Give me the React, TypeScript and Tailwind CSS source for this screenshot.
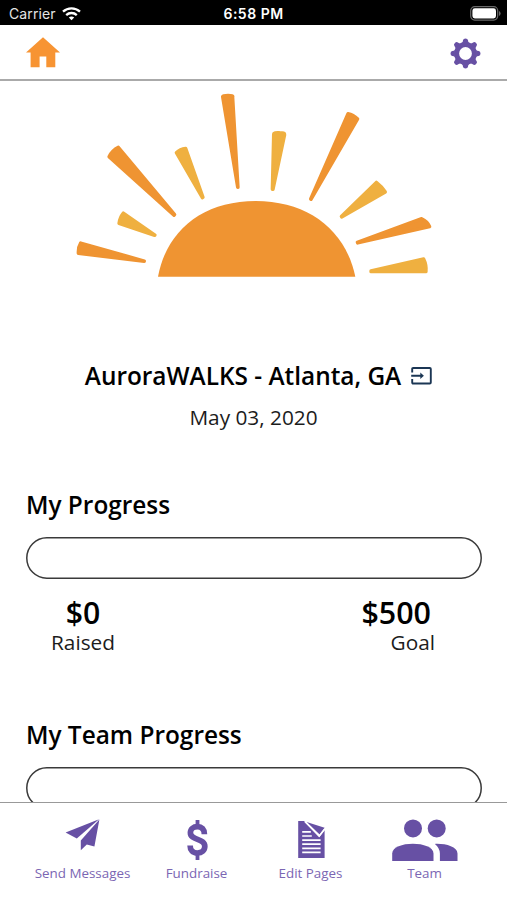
import React from "react";

function StatusBar() {
  return (
    <div className="grid h-[25px] shrink-0 grid-cols-3 items-center bg-black text-white">
      <div className="flex items-center gap-[6px] pl-[9px] pt-[3px]">
        <span className="font-['Inter',sans-serif] text-[14px] leading-[20px] tracking-[0.1px] text-[#e4e4e4]">Carrier</span>
        <svg width="19" height="14" viewBox="0 0 19 14" fill="none" stroke="#fff" strokeWidth="2.3">
          <path d="M1 4.7C5.8 .2 13.2 .2 18 4.7" />
          <path d="M4.2 8.1c3-2.8 7.6-2.8 10.6 0" />
          <path d="M9.5 13.2 6.8 10.5c1.5-1.4 3.9-1.4 5.4 0z" fill="#fff" stroke="none" />
        </svg>
      </div>
      <div className="pt-[3px] text-center font-['Inter',sans-serif] text-[14px] font-semibold leading-[20px] tracking-[0.5px] whitespace-nowrap">
        6:58 PM
      </div>
      <svg className="mt-[2px] mr-[6px] justify-self-end" width="31" height="15" viewBox="0 0 31 15">
        <rect x=".7" y=".7" width="27" height="13.4" rx="4" fill="none" stroke="#696969" strokeWidth="1.2" />
        <rect x="2.4" y="2.3" width="23.6" height="10.2" rx="2.4" fill="#fff" />
        <path d="M29 5v5q1.6-.8 1.6-2.5T29 5z" fill="#696969" />
      </svg>
    </div>
  );
}

function Header() {
  return (
    <header className="flex h-[56px] shrink-0 items-start justify-between border-b-2 border-[#aaaaaa] pt-[12px] pr-[26px] pl-[26px]">
      <svg width="34" height="31" viewBox="0 0 34 31" fill="#f79433">
        <path d="M17 .3 34 15.6h-4.7v14.7h-9V19.5h-6.7v10.8h-9V15.6H0z" />
      </svg>
      <svg className="mt-[0.5px]" width="31" height="31" viewBox="-15.5 -15.5 31 31" fill="#6750a4">
        <circle r="8.9" fill="none" stroke="#6750a4" strokeWidth="5" />
        {[0, 45, 90, 135, 180, 225, 270, 315].map((angle) => (
          <path
            key={angle}
            d="M-3.6-10.6Q-2.5-11.6-2.5-13.2-2.2-15 0-15T2.5-13.2Q2.5-11.6 3.6-10.6z"
            transform={`rotate(${angle})`}
          />
        ))}
      </svg>
    </header>
  );
}

function Sunrise() {
  return (
    <svg className="block w-full shrink-0" height="209" viewBox="0 81 507 209">
      <g transform="translate(60 80) scale(.33333)" strokeLinejoin="round" strokeWidth="10">
        <path d="M294 590C320 450 430 363 587 363S857 450 886 590z" fill="#ef9432" />
        <g fill="#ef9432" stroke="#ef9432">
          <path d="M62 489 253 543 253 544 55 520Q54 502 62 489z" />
          <path d="M147 230Q157 211 175 202L344 404 342 406z" />
          <path d="M488 51Q487 46 504 46T518 51L534 322H533z" />
          <path d="M864 101Q880 104 893 117L753 358 752 357z" />
          <path d="M892 487 1085 416Q1103 424 1109 440L893 489z" />
        </g>
        <g fill="#efb040" stroke="#efb040">
          <path d="M190 399 285 465 284 466 177 430Q179 413 190 399z" />
          <path d="M349 218Q360 207 377 205L429 352 427 353z" />
          <path d="M641 162Q641 157 659 158 675 158 674 164L639 328H637z" />
          <path d="M949 307Q966 320 976 336L845 411 844 409z" />
          <path d="M933 573 1091 537Q1100 555 1098 575H933z" />
        </g>
      </g>
    </svg>
  );
}

function ProgressBar() {
  return (
    <svg className="block h-[42px] w-[456px]" viewBox="0 0 456 42">
      <rect x=".8" y=".8" width="454.4" height="40.4" rx="20" fill="#fff" stroke="#3a3a3a" strokeWidth="1.5" />
    </svg>
  );
}

function EnterIcon() {
  return (
    <svg width="21" height="18" viewBox="0 0 21 18" fill="none" stroke="#1b3654" strokeWidth="1.9">
      <path d="M1.2 5.4V2q0-1 1-1h16.6q1 0 1 1v13.5q0 1-1 1H2.2q-1 0-1-1v-3.4M.2 8.8H11" />
      <path d="M9.3 5.5 12.9 8.8 9.3 12.1z" fill="#1b3654" stroke="none" />
    </svg>
  );
}

function SendIcon() {
  return (
    <svg width="35" height="32" viewBox="0 0 35 32" fill="#6750a4">
      <path d="M34 .3 .6 13.6 11.8 19.4z" />
      <path d="M34.4 .4 15.8 21.4V31.2l6-5.6 7.6 2z" />
    </svg>
  );
}

function DollarIcon() {
  return (
    <svg width="22" height="41" viewBox="0 0 22 41" fill="none" stroke="#6750a4">
      <path d="M11.5.9V6M11.5 35v5.9" strokeWidth="3.8" />
      <path
        d="M18.4 15.2C18.4 10.2 15.7 7.7 11.4 7.7 7.3 7.7 4.4 10 4.4 13.7c0 8.2 14.4 5.2 14.4 13.6 0 4.2-2.9 6.7-7.4 6.7-4.6 0-7.3-2.7-7.3-7.6"
        strokeWidth="5.7"
      />
    </svg>
  );
}

function PagesIcon() {
  return (
    <svg width="28" height="39" viewBox="0 0 28 39">
      <path d="M1.2 2H7L22.2 18.2 27.6 11v28H1.2z" fill="#6750a4" />
      <path d="M9.6 3.1 27.6 8.8 22.6 15.6z" fill="#6750a4" />
      <path
        d="M5.2 12.8h8.6M5.2 17h9.6M5.2 21.1h18.4M5.2 25.2h18.4M5.2 29.3h18.4M5.2 33.4h18.4"
        stroke="#fff"
        strokeWidth="1.7"
      />
      <path d="M8 2.6 22.3 17 27.8 10" fill="none" stroke="#fff" strokeWidth="1.5" />
    </svg>
  );
}

function TeamIcon() {
  return (
    <svg width="67" height="43" viewBox="0 0 67 43" fill="#6750a4">
      <circle cx="22" cy="9.4" r="9" />
      <circle cx="45.7" cy="9.4" r="9" />
      <path d="M1.2 42V34.5C1.2 21.4 42.5 21.4 42.5 34.5V42z" />
      <path d="M48.9 42V34.5q0-5.5-5-9.6C54 24.4 66.5 27.5 66.5 34.5V42z" />
    </svg>
  );
}

function Tab({ label, children }: { label: string; children: React.ReactNode }) {
  return (
    <div className="flex w-[114px] flex-col items-center">
      <div className="flex h-[43px] items-start justify-center">{children}</div>
      <span className="mt-[2px] text-[13.4px] leading-[18px] whitespace-nowrap text-[#7b66b3]">{label}</span>
    </div>
  );
}

export default function App() {
  return (
    <div className="flex h-[900px] w-[507px] flex-col overflow-hidden bg-white font-['Open_Sans',sans-serif] text-black">
      <StatusBar />
      <Header />
      <main className="min-h-0 flex-1 overflow-hidden">
        <Sunrise />
        <div className="mt-[70px] flex h-[32px] items-center justify-center gap-[10px] pl-[10px]">
          <h1 className="text-[24.4px] leading-[32px] font-semibold whitespace-nowrap">AuroraWALKS - Atlanta, GA</h1>
          <EnterIcon />
        </div>
        <p className="mt-[10px] text-center text-[20.8px] leading-[30px] text-[#1c1c1c]">May 03, 2020</p>
        <section className="mt-[57px] px-[26px]">
          <h2 className="text-[24.4px] leading-[32px] font-semibold">My Progress</h2>
          <div className="mt-[16px]">
            <ProgressBar />
          </div>
          <div className="mt-[18px] flex justify-between pr-[46px] pl-[25px]">
            <div className="flex flex-col items-center">
              <span className="text-[30.2px] leading-[32px] font-semibold">$0</span>
              <span className="text-[20.8px] leading-[26px] text-[#1c1c1c]">Raised</span>
            </div>
            <div className="flex flex-col items-end">
              <span className="mr-[4px] text-[30.4px] leading-[32px] font-semibold">$500</span>
              <span className="text-[20.8px] leading-[26px] text-[#1c1c1c]">Goal</span>
            </div>
          </div>
        </section>
        <section className="mt-[64px] px-[26px]">
          <h2 className="text-[24.4px] leading-[32px] font-semibold">My Team Progress</h2>
          <div className="mt-[16px]">
            <ProgressBar />
          </div>
        </section>
      </main>
      <nav className="flex h-[98px] shrink-0 justify-center border-t border-[#999999] bg-white pt-[16px]">
        <Tab label="Send Messages"><SendIcon /></Tab>
        <Tab label="Fundraise"><DollarIcon /></Tab>
        <Tab label="Edit Pages"><PagesIcon /></Tab>
        <Tab label="Team"><TeamIcon /></Tab>
      </nav>
    </div>
  );
}
